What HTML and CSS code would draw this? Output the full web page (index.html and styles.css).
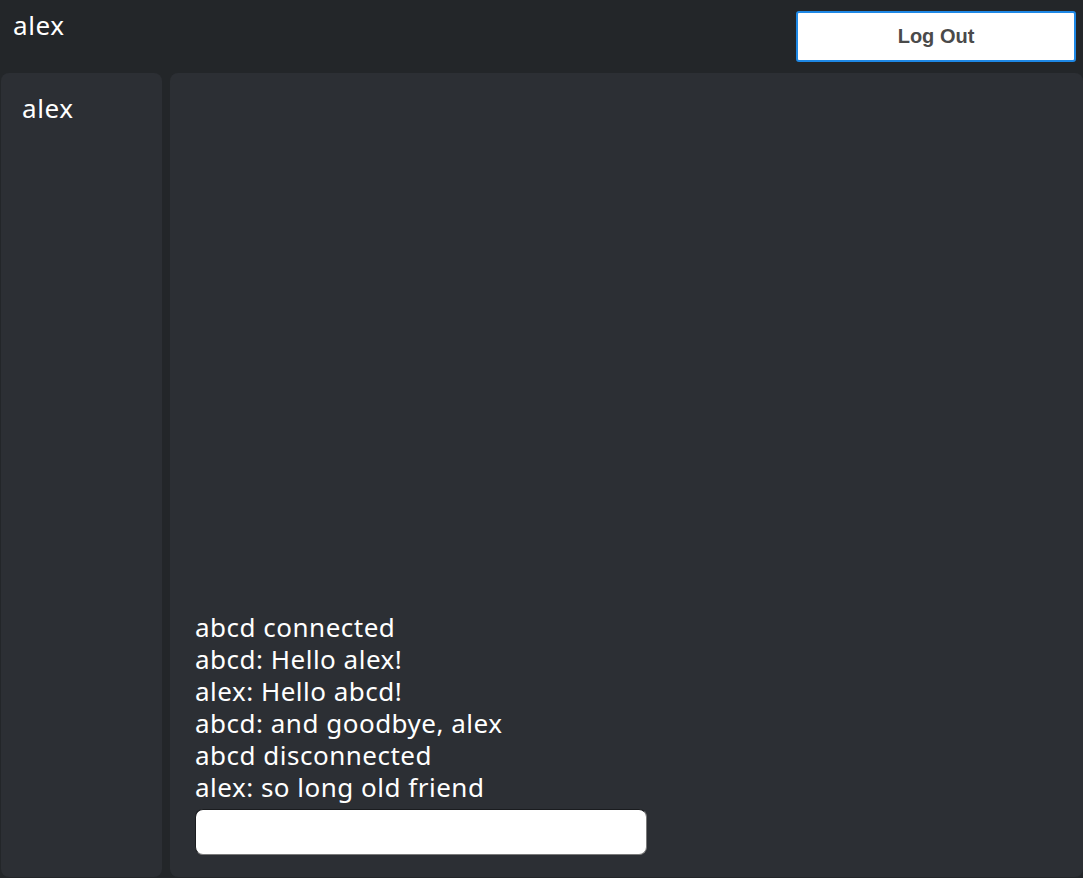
FILE: index.html
```html
<!DOCTYPE html>
<html>
<head>
<meta charset="utf-8">
<link rel="stylesheet" href="styles.css">
</head>
<body>
<header class="topbar">
  <div class="me">alex</div>
  <button class="logout">Log Out</button>
</header>
<div class="layout">
  <aside class="users">
    <div class="user">alex</div>
  </aside>
  <main class="chat">
    <div class="messages">
      <div class="msg">abcd connected</div>
      <div class="msg">abcd: Hello alex!</div>
      <div class="msg">alex: Hello abcd!</div>
      <div class="msg">abcd: and goodbye, alex</div>
      <div class="msg">abcd disconnected</div>
      <div class="msg">alex: so long old friend</div>
    </div>
    <input class="entry" type="text">
  </main>
</div>
</body>
</html>
```
FILE: styles.css
```css
html, body {
  margin: 0;
  height: 100%;
}
body {
  background: #232629;
  color: #ffffff;
  font-family: "Noto Sans", "DejaVu Sans", sans-serif;
  display: flex;
  flex-direction: column;
  overflow: hidden;
}
.topbar {
  height: 73px;
  flex: none;
  display: flex;
  justify-content: space-between;
  align-items: flex-start;
  box-sizing: border-box;
}
.me {
  font-size: 26px;
  letter-spacing: 0.6px;
  line-height: 30px;
  padding: 10px 0 0 13px;
}
.logout {
  margin: 11px 7px 0 0;
  width: 280px;
  height: 51px;
  background: #ffffff;
  border: 2px solid #1e88e5;
  border-radius: 3px;
  font-family: "Liberation Sans", Arial, sans-serif;
  font-weight: bold;
  font-size: 20px;
  color: #4a4a4a;
  padding: 0;
}
.layout {
  flex: 1;
  display: flex;
  gap: 8px;
  padding-left: 1px;
  min-height: 0;
}
.users {
  width: 161px;
  flex: none;
  background: #2c2f34;
  border-radius: 8px;
  margin-bottom: 1px;
  box-sizing: border-box;
  padding: 17px 0 0 21px;
}
.user {
  font-size: 26px;
  letter-spacing: 0.6px;
  line-height: 36px;
}
.chat {
  flex: 1;
  background: #2c2f34;
  border-radius: 8px;
  margin-bottom: 1px;
  display: flex;
  flex-direction: column;
  justify-content: flex-end;
  padding: 0 0 22px 25px;
}
.msg {
  font-size: 26px;
  letter-spacing: 0.5px;
  line-height: 32px;
}
.entry {
  margin-top: 6px;
  width: 452px;
  height: 46px;
  box-sizing: border-box;
  border: 1px solid;
  border-color: #1a1c1f #7a7a7a #7a7a7a #1a1c1f;
  border-radius: 8px;
  background: #ffffff;
}
```
